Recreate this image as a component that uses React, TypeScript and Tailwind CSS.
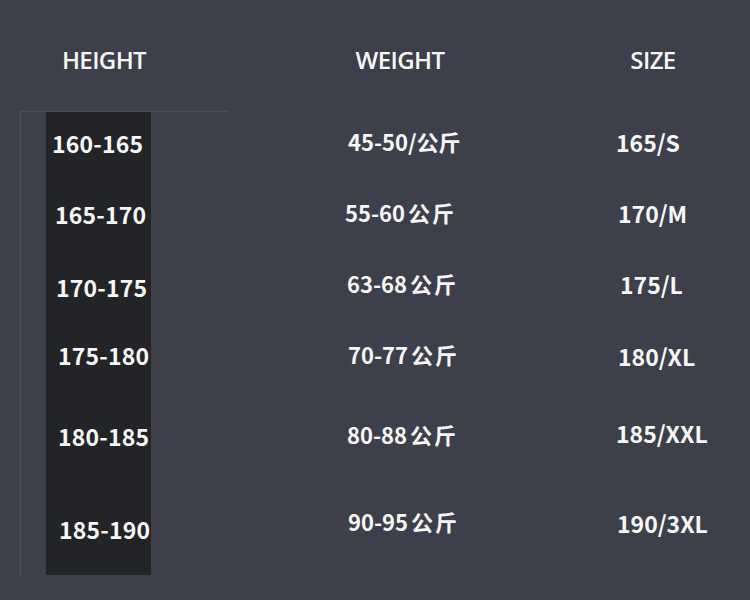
import React from "react";

const heights = [
  { t: "160-165", mt: "mt-[16px]", ml: "ml-[6px]" },
  { t: "165-170", mt: "mt-[41px]", ml: "ml-[9px]" },
  { t: "170-175", mt: "mt-[43px]", ml: "ml-[10px]" },
  { t: "175-180", mt: "mt-[38px]", ml: "ml-[12px]" },
  { t: "180-185", mt: "mt-[51px]", ml: "ml-[12px]" },
  { t: "185-190", mt: "mt-[63px]", ml: "ml-[13px]" },
];

const weights = [
  { t: "45-50/", mt: "mt-[14px]", ml: "ml-[1px]", slash: true },
  { t: "55-60", mt: "mt-[41px]", ml: "ml-[-2px]", slash: false },
  { t: "63-68", mt: "mt-[41px]", ml: "ml-[0px]", slash: false },
  { t: "70-77", mt: "mt-[41px]", ml: "ml-[1px]", slash: false },
  { t: "80-88", mt: "mt-[50px]", ml: "ml-[0px]", slash: false },
  { t: "90-95", mt: "mt-[57px]", ml: "ml-[1px]", slash: false },
];

const sizes = [
  { t: "165/S", mt: "mt-[15px]", ml: "ml-[-1px]" },
  { t: "170/M", mt: "mt-[41px]", ml: "ml-[1px]" },
  { t: "175/L", mt: "mt-[41px]", ml: "ml-[3px]" },
  { t: "180/XL", mt: "mt-[42px]", ml: "ml-[1px]" },
  { t: "185/XXL", mt: "mt-[47px]", ml: "ml-[-1px]" },
  { t: "190/3XL", mt: "mt-[60px]", ml: "ml-[0px]" },
];

const numFont = { fontFamily: '"Noto Sans CJK SC", "Noto Sans", sans-serif' };

export default function App() {
  return (
    <div className="w-[750px] h-[600px] bg-[#3d404b] overflow-hidden text-[#f7f7f7]">
      <div
        className="flex h-[111px] pt-[45px] text-[24px] leading-[30px] font-semibold tracking-[-0.6px]"
        style={{ fontFamily: '"Open Sans", sans-serif' }}
      >
        <div className="w-[208px] text-center">HEIGHT</div>
        <div className="w-[384px] text-center">WEIGHT</div>
        <div className="w-[122px] text-center">SIZE</div>
      </div>
      <div className="ml-[20px] h-[464px] border-l border-[#4c4f5a] flex flex-col">
        <div className="h-px w-[207px] bg-[#4a4d58]" />
        <div className="flex flex-1" style={numFont}>
          <div className="w-[25px]" />
          <div className="w-[105px] bg-[#222427] flex flex-col text-[23px] leading-[30px] font-bold tracking-[0.2px]">
            {heights.map((h) => (
              <div key={h.t} className={`${h.mt} ${h.ml} whitespace-nowrap`}>
                {h.t}
              </div>
            ))}
          </div>
          <div className="w-[466px] pl-[196px] flex flex-col text-[22px] leading-[30px] font-bold">
            {weights.map((h) => (
              <div key={h.t} className={`${h.mt} ${h.ml} whitespace-nowrap`}>
                {h.t}
                {h.slash ? (
                  <span>公斤</span>
                ) : (
                  <span className="ml-[3px] tracking-[2px]">公斤</span>
                )}
              </div>
            ))}
          </div>
          <div className="flex flex-col text-[23px] leading-[30px] font-bold">
            {sizes.map((h) => (
              <div key={h.t} className={`${h.mt} ${h.ml} whitespace-nowrap`}>
                {h.t}
              </div>
            ))}
          </div>
        </div>
      </div>
    </div>
  );
}
